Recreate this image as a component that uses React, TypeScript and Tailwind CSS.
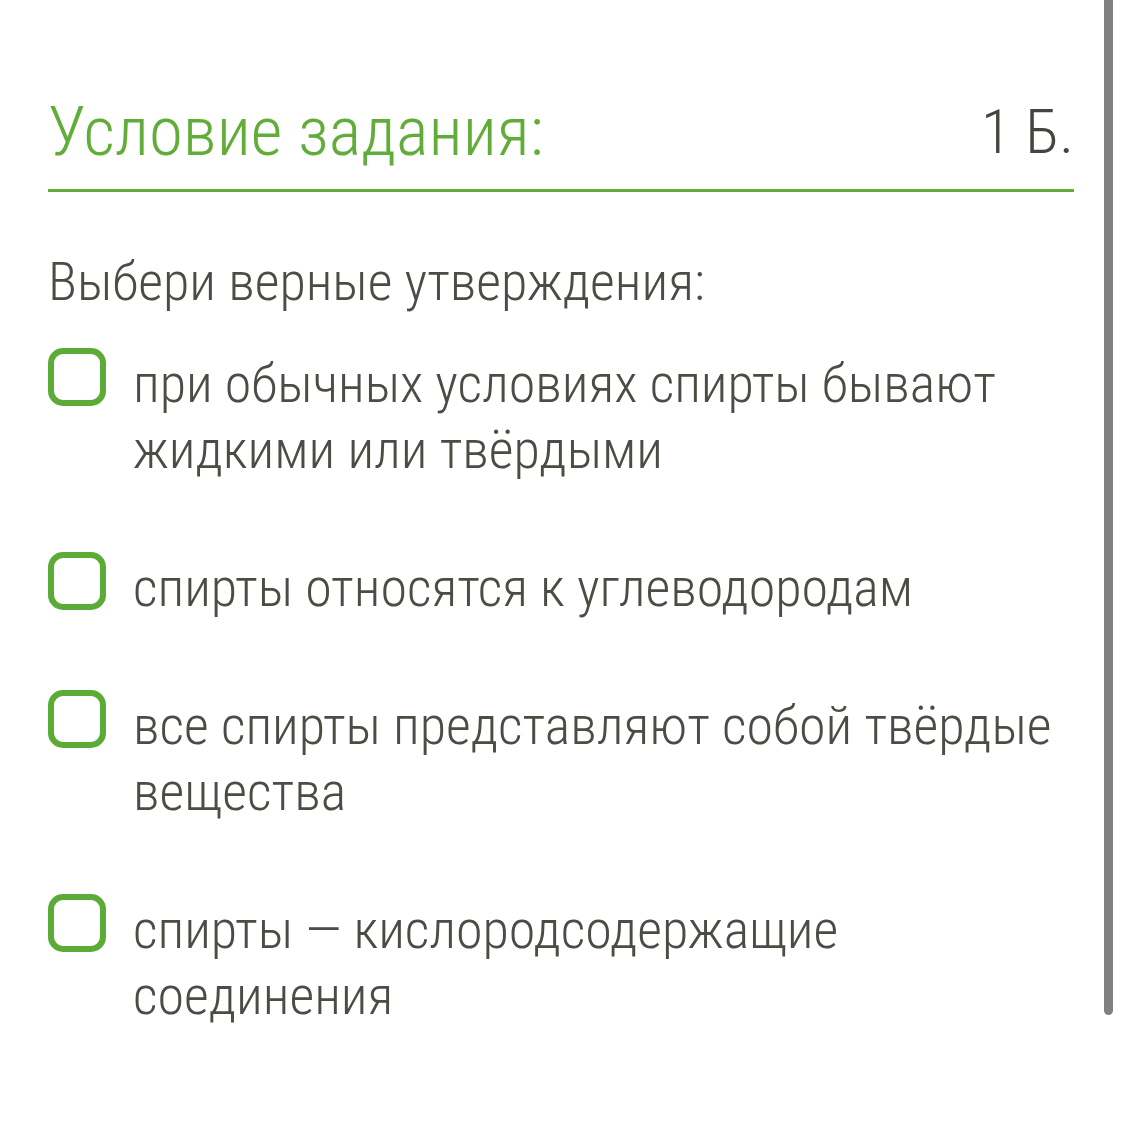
import React from "react";

const items = [
  "при обычных условиях спирты бывают жидкими или твёрдыми",
  "спирты относятся к углеводородам",
  "все спирты представляют собой твёрдые вещества",
  "спирты — кислородсодержащие соединения",
];

export default function App() {
  return (
    <div
      className="relative w-[1122px] h-[1124px] bg-white overflow-hidden"
      style={{ fontFamily: "Roboto, 'Noto Sans', sans-serif", fontStretch: "condensed" }}
    >
      <div className="pl-[48px] pr-[48px] pt-[92px]">
        <div className="flex items-end justify-between border-b-[3px] border-[#62ad3a] pb-[17px]">
          <div className="text-[69px] leading-[80px] font-light text-[#62ad3a]">Условие задания:</div>
          <div className="text-[62px] leading-[80px] font-light text-[#454540]">1 Б.</div>
        </div>
        <div className="mt-[57px] text-[54px] leading-[66px] font-light text-[#4c4c45]">
          Выбери верные утверждения:
        </div>
        <div className="mt-[33px] flex flex-col gap-[69px]">
          {items.map((t, i) => (
            <div key={i} className="flex items-start gap-[27px]">
              <div className="w-[58px] h-[58px] shrink-0 rounded-[15px] border-[6px] border-[#5dab37]" />
              <div className="mt-[3px] text-[54px] leading-[66px] font-light text-[#4c4c45]">{t}</div>
            </div>
          ))}
        </div>
      </div>
      <div className="absolute left-[1104px] top-0 w-[9px] h-[1015px] bg-[#808080] rounded-b-full" />
    </div>
  );
}
